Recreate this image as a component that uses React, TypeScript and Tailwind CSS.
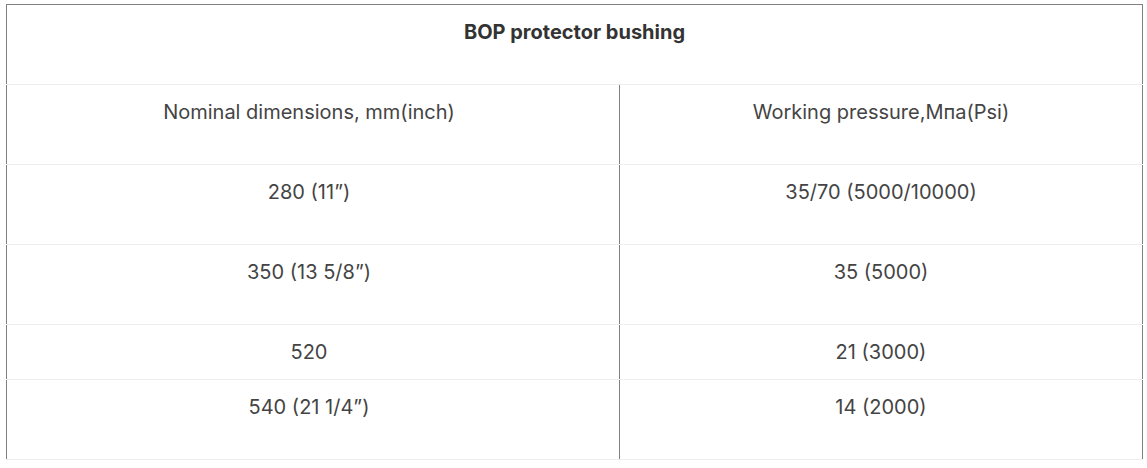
const rows = [
  { h: 'h-[80px]', a: '280 (11”)', b: '35/70 (5000/10000)' },
  { h: 'h-[80px]', a: '350 (13 5/8”)', b: '35 (5000)' },
  { h: 'h-[55px]', a: '520', b: '21 (3000)' },
  { h: 'h-[80px]', a: '540 (21 1/4”)', b: '14 (2000)' },
];

export default function App() {
  return (
    <div className="min-h-screen bg-white pl-[6px] pt-[4px] font-['Inter',sans-serif] text-[20px] leading-[24px] text-[#444]">
      <div className="w-[1137px]">
        {/* title row */}
        <div className="h-[81px] border-t border-b border-t-[#808080] border-b-[#eeeeee]">
          <div className="h-full border-l border-r border-[#808080] pt-[15px] text-center font-bold text-[#333]">
            BOP protector bushing
          </div>
        </div>

        <Row h="h-[80px]" a="Nominal dimensions, mm(inch)" b="Working pressure,Mпа(Psi)" />
        {rows.map((r) => (
          <Row key={r.a} h={r.h} a={r.a} b={r.b} />
        ))}
      </div>
    </div>
  );
}

function Row({ h, a, b }: { h: string; a: string; b: string }) {
  return (
    <div className={`flex border-b border-[#eeeeee] ${h}`}>
      <div className="w-[614px] border-l border-r border-[#808080] pt-[15px] pr-[8px] text-center">{a}</div>
      <div className="flex-1 border-r border-[#808080] pt-[15px] text-center">{b}</div>
    </div>
  );
}
